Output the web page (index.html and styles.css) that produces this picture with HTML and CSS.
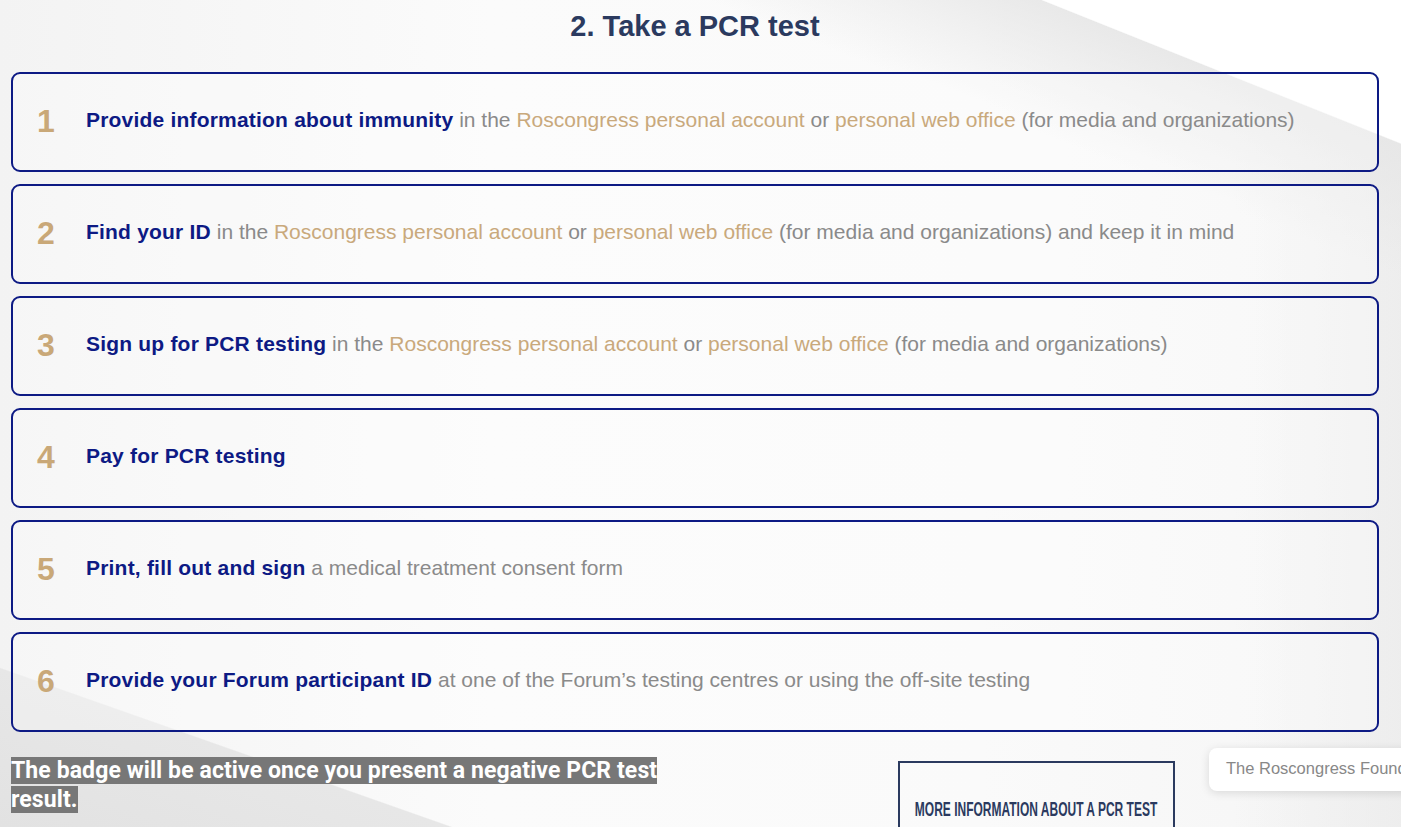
FILE: index.html
```html
<!DOCTYPE html>
<html lang="en">
<head>
<meta charset="utf-8">
<title>Take a PCR test</title>
<link rel="stylesheet" href="styles.css">
</head>
<body>
<div class="page">
  <h2 class="title">2. Take a PCR test</h2>
  <div class="steps">
    <div class="step"><span class="num">1</span><p class="txt"><b>Provide information about immunity</b> in the <a>Roscongress personal account</a> or <a>personal web office</a> (for media and organizations)</p></div>
    <div class="step"><span class="num">2</span><p class="txt"><b>Find your ID</b> in the <a>Roscongress personal account</a> or <a>personal web office</a> (for media and organizations) and keep it in mind</p></div>
    <div class="step"><span class="num">3</span><p class="txt"><b>Sign up for PCR testing</b> in the <a>Roscongress personal account</a> or <a>personal web office</a> (for media and organizations)</p></div>
    <div class="step"><span class="num">4</span><p class="txt"><b>Pay for PCR testing</b></p></div>
    <div class="step"><span class="num">5</span><p class="txt"><b>Print, fill out and sign</b> a medical treatment consent form</p></div>
    <div class="step"><span class="num">6</span><p class="txt"><b>Provide your Forum participant ID</b> at one of the Forum’s testing centres or using the off-site testing</p></div>
  </div>
  <div class="bottom">
    <p class="note"><span>The badge will be active once you present a negative PCR test result.</span></p>
    <a class="more"><span>MORE INFORMATION ABOUT A PCR TEST</span></a>
  </div>
</div>
<div class="toast">The Roscongress Foundation uses cookies</div>
</body>
</html>
```
FILE: styles.css
```css
html, body { margin: 0; padding: 0; }
body {
  width: 1401px;
  height: 827px;
  overflow: hidden;
  font-family: "Liberation Sans", Arial, sans-serif;
  background-color: #f8f8f8;
  background-image:
    linear-gradient(21.8deg, rgba(255,255,255,0) 89.6%, #ffffff 89.7%),
    linear-gradient(21.8deg, rgba(236,236,236,0) 80%, rgba(230,230,230,0.85) 89.6%, rgba(255,255,255,0) 89.7%),
    linear-gradient(199.4deg, rgba(230,230,230,0) 87.9%, #e7e7e7 88%, #e2e2e2 100%),
    linear-gradient(90deg, rgba(235,235,235,0) 88%, rgba(234,234,234,0.7) 100%),
    linear-gradient(90deg, #f3f3f3 0%, #fbfbfb 35%, #fafafa 70%, #f5f5f5 100%);
  position: relative;
}
.page {
  width: 1368px;
  margin-left: 11px;
}
.title {
  margin: 0;
  padding-top: 9px;
  height: 72px;
  box-sizing: border-box;
  text-align: center;
  font-size: 29px;
  line-height: 34px;
  font-weight: 700;
  color: #2b3a5f;
}
.steps {
  display: flex;
  flex-direction: column;
  gap: 12px;
}
.step {
  height: 100px;
  box-sizing: border-box;
  border: 2px solid #0d1a84;
  border-radius: 9px;
  display: flex;
  align-items: center;
  padding-left: 24px;
  padding-bottom: 4px;
  background: rgba(255,255,255,0.3);
}
.num {
  width: 49px;
  font-size: 32px;
  font-weight: 700;
  color: #c9a878;
  line-height: 1;
  margin-top: 2px;
}
.txt {
  margin: 0;
  font-size: 21px;
  color: #8a8a8a;
  line-height: 24px;
}
.txt b { color: #0d1a84; letter-spacing: 0.2px; }
.txt a { color: #c9a97c; }
.bottom {
  display: flex;
  align-items: flex-start;
  margin-top: 24px;
}
.note {
  margin: 0;
  width: 670px;
  font-family: Roboto, "Liberation Sans", sans-serif;
  font-weight: 700;
  font-size: 23px;
  line-height: 29px;
  letter-spacing: 0.1px;
  color: #fff;
}
.note span { background: #777; }
.more {
  margin-left: 217px;
  margin-top: 5px;
  width: 277px;
  height: 80px;
  box-sizing: border-box;
  border: 2px solid #2b3a5f;
  border-bottom: none;
  padding-top: 35px;
  display: flex;
  justify-content: center;
  font-family: "Liberation Sans", sans-serif;
  font-weight: 700;
  font-size: 20px;
  color: #2b3a5f;
  white-space: nowrap;
}
.more span {
  display: inline-block;
  transform: scaleX(0.6);
  transform-origin: center;
}
.toast {
  position: absolute;
  left: 1209px;
  top: 748px;
  width: 260px;
  height: 43px;
  box-sizing: border-box;
  padding: 11px 17px;
  background: #fff;
  border-radius: 8px;
  box-shadow: 0 2px 10px rgba(0,0,0,0.12);
  font-size: 16.5px;
  color: #888;
  white-space: nowrap;
}
```
